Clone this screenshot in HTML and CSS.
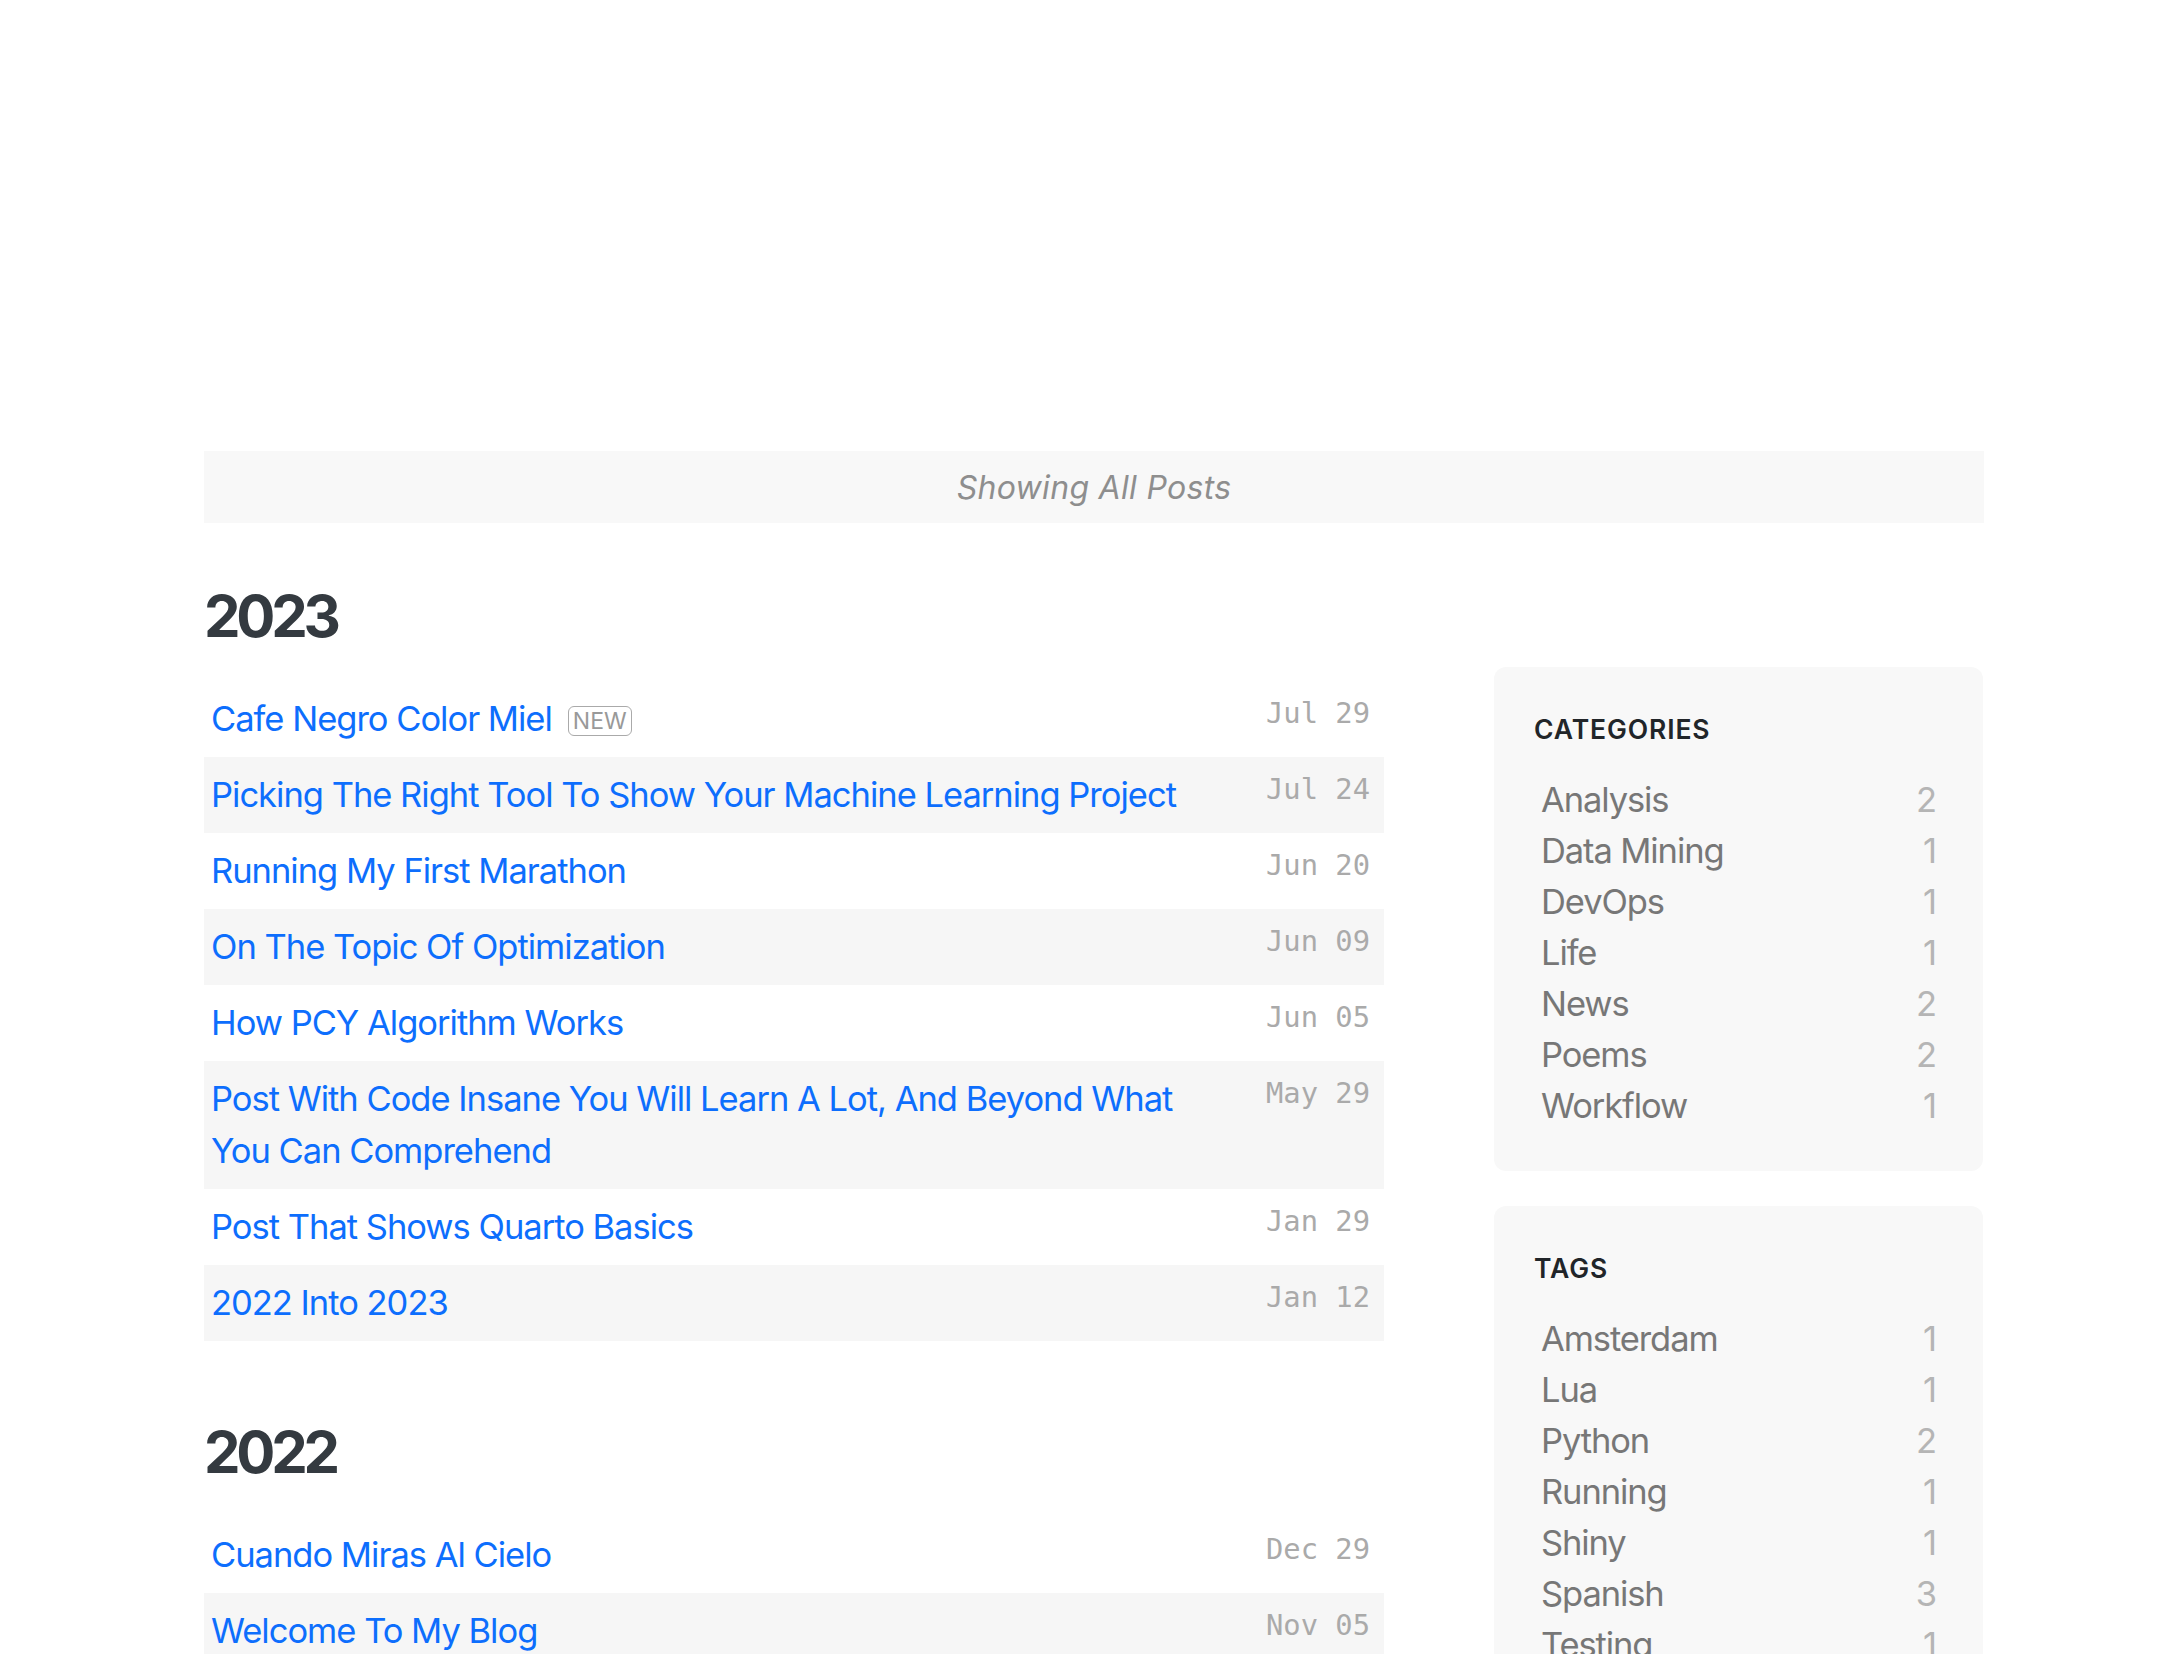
FILE: index.html
```html
<!DOCTYPE html>
<html lang="en">
<head>
<meta charset="utf-8">
<title>Blog</title>
<link rel="stylesheet" href="styles.css">
</head>
<body>
<div class="page">
  <div class="banner"><span class="banner-text">Showing All Posts</span></div>
  <div class="layout">
    <main class="main">
      <section class="year first">
        <h2 class="year-title">2023</h2>
        <ul class="posts">
          <li class="post"><a class="post-title" href="#">Cafe Negro Color Miel</a><span class="badge">NEW</span><span class="post-date">Jul 29</span></li>
          <li class="post"><a class="post-title" href="#">Picking The Right Tool To Show Your Machine Learning Project</a><span class="post-date">Jul 24</span></li>
          <li class="post"><a class="post-title" href="#">Running My First Marathon</a><span class="post-date">Jun 20</span></li>
          <li class="post"><a class="post-title" href="#">On The Topic Of Optimization</a><span class="post-date">Jun 09</span></li>
          <li class="post"><a class="post-title" href="#">How PCY Algorithm Works</a><span class="post-date">Jun 05</span></li>
          <li class="post"><a class="post-title" href="#">Post With Code Insane You Will Learn A Lot, And Beyond What You Can Comprehend</a><span class="post-date">May 29</span></li>
          <li class="post"><a class="post-title" href="#">Post That Shows Quarto Basics</a><span class="post-date">Jan 29</span></li>
          <li class="post"><a class="post-title" href="#">2022 Into 2023</a><span class="post-date">Jan 12</span></li>
        </ul>
      </section>
      <section class="year">
        <h2 class="year-title">2022</h2>
        <ul class="posts">
          <li class="post"><a class="post-title" href="#">Cuando Miras Al Cielo</a><span class="post-date">Dec 29</span></li>
          <li class="post"><a class="post-title" href="#">Welcome To My Blog</a><span class="post-date">Nov 05</span></li>
        </ul>
      </section>
    </main>
    <aside class="sidebar">
      <div class="box">
        <h3 class="box-title">CATEGORIES</h3>
        <ul class="terms">
          <li class="term"><span>Analysis</span><span class="count">2</span></li>
          <li class="term"><span>Data Mining</span><span class="count">1</span></li>
          <li class="term"><span>DevOps</span><span class="count">1</span></li>
          <li class="term"><span>Life</span><span class="count">1</span></li>
          <li class="term"><span>News</span><span class="count">2</span></li>
          <li class="term"><span>Poems</span><span class="count">2</span></li>
          <li class="term"><span>Workflow</span><span class="count">1</span></li>
        </ul>
      </div>
      <div class="box">
        <h3 class="box-title">TAGS</h3>
        <ul class="terms">
          <li class="term"><span>Amsterdam</span><span class="count">1</span></li>
          <li class="term"><span>Lua</span><span class="count">1</span></li>
          <li class="term"><span>Python</span><span class="count">2</span></li>
          <li class="term"><span>Running</span><span class="count">1</span></li>
          <li class="term"><span>Shiny</span><span class="count">1</span></li>
          <li class="term"><span>Spanish</span><span class="count">3</span></li>
          <li class="term"><span>Testing</span><span class="count">1</span></li>
        </ul>
      </div>
    </aside>
  </div>
</div>
</body>
</html>
```
FILE: styles.css
```css
html, body {
  margin: 0;
  padding: 0;
  background: #ffffff;
}
body {
  font-family: Inter, "Noto Sans", sans-serif;
  color: #343a40;
}
ul {
  list-style: none;
  margin: 0;
  padding: 0;
}
.page {
  width: 1780px;
  margin-left: 204px;
  padding-top: 451px;
}
.banner {
  height: 72px;
  background: #f8f8f8;
  display: flex;
  align-items: center;
  justify-content: center;
}
.banner-text {
  font-style: italic;
  font-size: 32px;
  color: #8e8e8e;
  letter-spacing: 0.3px;
}
.layout {
  display: flex;
  gap: 110px;
}
.main {
  width: 1180px;
  flex: none;
}
.year-title {
  font-size: 58px;
  line-height: 70px;
  font-weight: 700;
  letter-spacing: -4.2px;
  margin: 76px 0 30px;
  color: #343a40;
}
.year.first .year-title {
  margin-top: 58px;
}
.post {
  display: flex;
  align-items: flex-start;
  padding: 12px 14px 12px 7px;
  font-size: 34.5px;
  line-height: 52px;
  letter-spacing: -1px;
}
.post:nth-child(even) {
  background: #f6f6f6;
}
.post-title {
  color: #0d6efd;
  text-decoration: none;
  flex: 0 1 auto;
  max-width: 1010px;
}
.badge {
  display: inline-block;
  align-self: flex-start;
  margin-top: 13px;
  margin-left: 16px;
  height: 28px;
  line-height: 28px;
  padding: 0 4px;
  border: 1.5px solid #aaaaaa;
  border-radius: 6px;
  font-size: 23px;
  color: #999999;
  letter-spacing: 0;
}
.post-date {
  margin-left: auto;
  font-family: "DejaVu Sans Mono", "Liberation Mono", monospace;
  font-size: 28.8px;
  line-height: 41px;
  color: #aaaaaa;
  letter-spacing: 0;
  white-space: nowrap;
  flex: none;
}
.sidebar {
  width: 489px;
  flex: none;
  padding-top: 144px;
  display: flex;
  flex-direction: column;
  gap: 35px;
}
.box {
  background: #f8f8f8;
  border-radius: 12px;
  padding: 47px 40px 40px 40px;
}
.box-title {
  margin: 0 0 29px;
  font-size: 26.5px;
  line-height: 31px;
  font-weight: 600;
  color: #212529;
  letter-spacing: 0.9px;
}
.term {
  display: flex;
  justify-content: space-between;
  padding: 0 7px;
  font-size: 34.5px;
  line-height: 51px;
  color: #777777;
  letter-spacing: -1.1px;
}
.count {
  color: #b5b5b5;
}
```
